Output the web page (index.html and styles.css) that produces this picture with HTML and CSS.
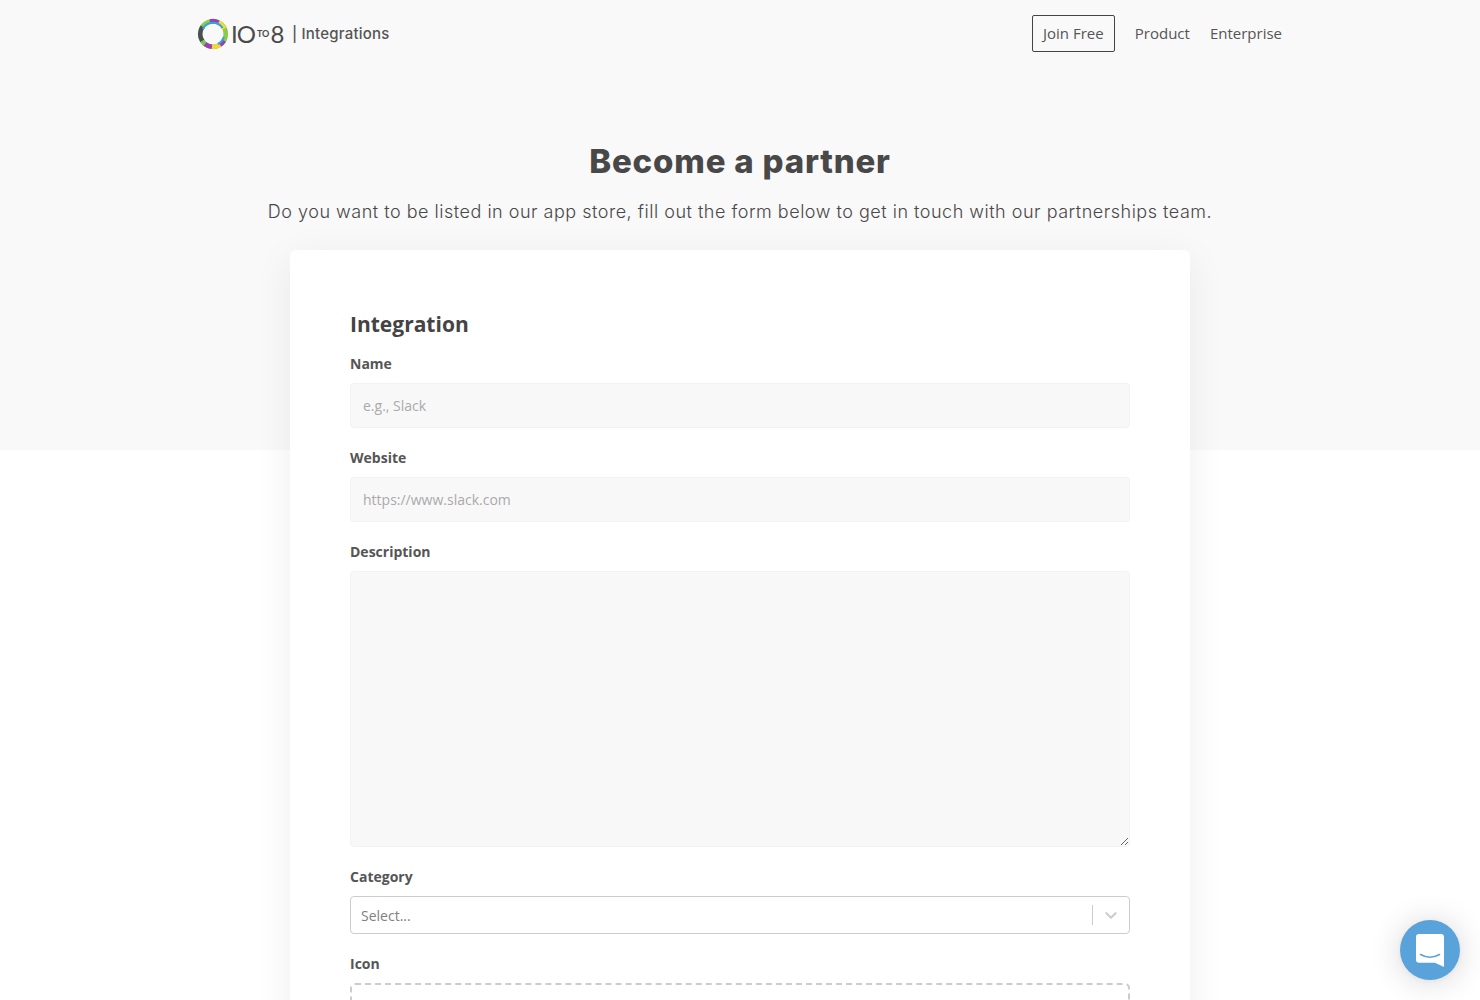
FILE: index.html
```html
<!DOCTYPE html>
<html lang="en">
<head>
<meta charset="utf-8">
<title>Become a partner</title>
<link rel="stylesheet" href="styles.css">
</head>
<body>
<section class="hero">
  <header class="nav">
    <a class="brand" href="#">
      <svg class="ring" width="32" height="32" viewBox="0 0 32 32" fill="none" stroke-width="4.600">
        <circle cx="16" cy="16" r="12.800" stroke="#8ccb4c"/>
        <path d="M5.500 8.700A12.800 12.800 0 0 0 5.300 23" stroke="#4a4f55"/>
        <path d="M5.300 23A12.800 12.800 0 0 0 8 26" stroke="#7cc65a"/>
        <path d="M8 26A12.800 12.800 0 0 0 15 28.800" stroke="#9b3fb5"/>
        <path d="M15 28.800A12.800 12.800 0 0 0 23 26.700" stroke="#f4d63c"/>
        <path d="M23 26.700A12.800 12.800 0 0 0 27 22.500" stroke="#9b3fb5"/>
        <path d="M27.500 10.500A12.800 12.800 0 0 0 21.500 4.500" stroke="#f4d63c"/>
        <path d="M21.500 4.500A12.800 12.800 0 0 0 13 3.500" stroke="#9b3fb5"/>
        <path d="M6 11A11.200 11.200 0 0 1 25.500 10M26.800 19A11.200 11.200 0 0 1 21 26" stroke="#2fa4e0" stroke-width="2"/>
      </svg>
      <span class="word"><span class="big">IO</span><span class="small">TO</span><span class="big">8</span></span>
      <span class="suffix">| Integrations</span>
    </a>
    <nav class="links">
      <a class="join" href="#">Join Free</a>
      <a class="link" href="#">Product</a>
      <a class="link" href="#">Enterprise</a>
    </nav>
  </header>
  <h1>Become a partner</h1>
  <p class="lead">Do you want to be listed in our app store, fill out the form below to get in touch with our partnerships team.</p>
</section>
<main class="card">
  <h2>Integration</h2>
  <form class="form">
    <label class="field"><span class="label">Name</span><input class="input" placeholder="e.g., Slack"></label>
    <label class="field"><span class="label">Website</span><input class="input" placeholder="https://www.slack.com"></label>
    <label class="field"><span class="label">Description</span><textarea class="input area"></textarea></label>
    <div class="field">
      <span class="label">Category</span>
      <div class="select">
        <span class="select-text">Select...</span>
        <span class="sep"></span>
        <svg class="chev" width="20" height="20" viewBox="0 0 20 20"><path fill="#ccc" d="M4.500 7.300a1 1 0 0 1 1.400 0L10 11.300l4.100-4a1 1 0 0 1 1.400 1.400l-4.800 4.700a1 1 0 0 1-1.400 0L4.500 8.700a1 1 0 0 1 0-1.400z"/></svg>
      </div>
    </div>
    <div class="field">
      <span class="label">Icon</span>
      <div class="drop"></div>
    </div>
  </form>
</main>
<a class="chat" href="#" aria-label="Chat">
  <svg width="28" height="33" viewBox="0 0 28 33"><path fill="#fff" d="M3 0h22a3 3 0 0 1 3 3v30l-9-4.300H3a3 3 0 0 1-3-3V3a3 3 0 0 1 3-3z"/><path d="M4.500 20.500c6 3.400 13 3.400 19 0" fill="none" stroke="#5aa3da" stroke-width="1.600" stroke-linecap="round"/></svg>
</a>
</body>
</html>
```
FILE: styles.css
```css
* { box-sizing: border-box; }
html, body { margin: 0; padding: 0; }
body { background: #fff; color: #444; font-family: "Open Sans", sans-serif; }
a { color: inherit; text-decoration: none; }

.hero { background: #f9f9f9; height: 450px; padding-top: 15px; display: flex; flex-direction: column; align-items: center; }
.nav { width: 1084px; height: 37px; display: flex; align-items: center; justify-content: space-between; }
.brand { display: flex; align-items: center; }
.ring { margin-left: -1px; margin-right: 2px; }
.word { display: flex; align-items: center; color: #4a4a4a; font-family: "Lato", sans-serif; width: 54px; }
.big { font-size: 24px; font-weight: 400; line-height: 1; letter-spacing: -1px; }
.small { font-size: 9px; font-weight: 700; margin: 0 1px 0 2px; }
.suffix { margin-left: 7px; font-family: "Inter", sans-serif; font-weight: 500; font-size: 15px; letter-spacing: .2px; color: #555; }
.links { display: flex; align-items: center; gap: 20px; font-size: 15px; color: #555; }
.link { padding-bottom: 2px; }
.join { height: 37px; width: 83px; padding-bottom: 2px; border: 1px solid #444; border-radius: 2px; display: flex; align-items: center; justify-content: center; color: #555; }

h1 { margin: 87px 0 0; font-family: "Inter", sans-serif; font-weight: 800; font-size: 33px; letter-spacing: .8px; line-height: 44px; color: #484848; }
.lead { margin: 16px 0 0; font-family: "Inter", sans-serif; font-weight: 300; font-size: 18px; letter-spacing: .51px; line-height: 26px; color: #484848; }

.card { width: 900px; margin: -200px auto 60px; position: relative; background: #fff; border-radius: 6px; padding: 60px; box-shadow: 0 10px 40px rgba(0, 0, 0, .07); }
h2 { margin: 0 0 16px; font-size: 21px; font-weight: 700; line-height: 28px; color: #444; }
.form { display: flex; flex-direction: column; gap: 20px; }
.field { display: flex; flex-direction: column; }
.label { font-size: 14px; font-weight: 700; line-height: 19px; color: #555; margin-bottom: 10px; }
.input { display: block; width: 100%; height: 45px; padding: 0 12px; border: 1px solid #f2f2f2; border-radius: 4px; background: #f8f8f8; font-family: "Open Sans", sans-serif; font-size: 14px; color: #444; outline: none; }
.input::placeholder { color: #aaa; opacity: 1; }
.area { height: 276px; padding: 10px 12px; resize: vertical; }
.select { height: 38px; border: 1px solid #ccc; border-radius: 4px; display: flex; align-items: center; padding: 0 8px 0 10px; }
.select-text { flex: 1; font-size: 14px; color: #808080; }
.sep { width: 1px; height: 20px; background: #ccc; margin-right: 8px; }
.chev { display: block; }
.drop { height: 160px; border: 2px dashed #ccc; border-radius: 5px; }

.chat { position: fixed; right: 20px; bottom: 20px; width: 60px; height: 60px; border-radius: 50%; background: #5aa3da; display: flex; align-items: center; justify-content: center; box-shadow: 0 1px 6px rgba(0, 0, 0, .06), 0 2px 32px rgba(0, 0, 0, .16); }
```
